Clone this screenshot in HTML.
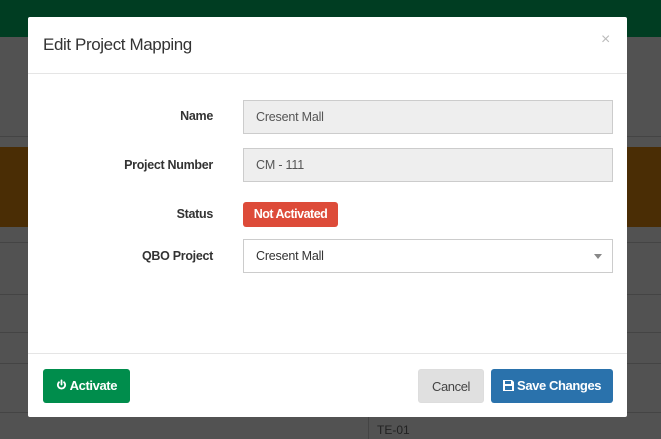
<!DOCTYPE html>
<html style="background:#525252"><head><meta charset="utf-8"><style>
*{box-sizing:border-box;margin:0;padding:0}
body{width:661px;height:439px;overflow:hidden;background:#525252;font-family:"Liberation Sans",sans-serif;position:relative}
.abs{position:absolute}
.line{position:absolute;left:0;width:661px;height:1px;background:#444}
.modal{position:absolute;left:28px;top:17px;width:599px;height:400px;background:#fff;border-radius:2px}
.lbl{position:absolute;right:414px;font-size:12.5px;font-weight:bold;color:#333;letter-spacing:-0.3px;text-align:right}
.inp{position:absolute;left:215px;width:370px;height:34px;border:1px solid #ccc;font-size:12.5px;color:#555;padding:9px 12px;letter-spacing:-0.2px}
.btn{position:absolute;top:352px;height:34px;border-radius:3px;font-size:13px;letter-spacing:-0.4px;padding-top:9px;text-align:center}
</style></head><body>
<div class="abs" style="left:0;top:0;width:661px;height:439px;background:#525252"></div>
<div class="abs" style="left:0;top:0;width:661px;height:37px;background:#003d22"></div>
<div class="abs" style="left:0;top:147px;width:661px;height:80px;background:#4a2d05"></div>
<div class="line" style="top:136px"></div>
<div class="line" style="top:242px"></div>
<div class="line" style="top:294px"></div>
<div class="line" style="top:332px"></div>
<div class="line" style="top:363px"></div>
<div class="line" style="top:412px"></div>
<div class="abs" style="left:368px;top:417px;width:1px;height:22px;background:#444"></div>
<div class="abs" style="left:377px;top:423px;font-size:12px;color:#222">TE-01</div>
<div class="modal">
  <div class="abs" style="left:15px;top:18px;font-size:17px;color:#333;letter-spacing:-0.4px">Edit Project Mapping</div>
  <div class="abs" style="left:573px;top:14px;font-size:16px;color:#bbb">×</div>
  <div class="abs" style="left:0;top:56px;width:599px;height:1px;background:#e5e5e5"></div>
  <div class="lbl" style="top:92px">Name</div>
  <div class="inp" style="top:83px;background:#eee">Cresent Mall</div>
  <div class="lbl" style="top:141px">Project Number</div>
  <div class="inp" style="top:131px;background:#eee">CM - 111</div>
  <div class="lbl" style="top:190px">Status</div>
  <div class="abs" style="left:215px;top:185px;width:95px;height:25px;background:#dd4b39;border-radius:3px;color:#fff;font-size:12.5px;font-weight:bold;letter-spacing:-0.5px;text-align:center;padding-top:5px">Not Activated</div>
  <div class="lbl" style="top:232px">QBO Project</div>
  <div class="inp" style="top:222px;background:#fff;color:#333">Cresent Mall<span class="abs" style="right:10px;top:14px;border-left:4px solid transparent;border-right:4px solid transparent;border-top:5px solid #888"></span></div>
  <div class="abs" style="left:0;top:336px;width:599px;height:1px;background:#e5e5e5"></div>
  <div class="btn" style="left:15px;width:87px;background:#008d4c;color:#fff;font-weight:bold">
    <svg width="11" height="12" viewBox="0 0 12 12" style="vertical-align:-1px"><path d="M6 1v4.5M3.2 3A4 4 0 1 0 8.8 3" fill="none" stroke="#fff" stroke-width="2" stroke-linecap="round"/></svg> Activate</div>
  <div class="btn" style="left:390px;width:66px;background:#e0e0e0;color:#444;border:1px solid #ddd">Cancel</div>
  <div class="btn" style="left:463px;width:122px;background:#2a72ac;color:#fff;font-weight:bold">
    <svg width="11" height="11" viewBox="0 0 11 11" style="vertical-align:-1px"><path d="M0 0h9l2 2v9H0z" fill="#fff"/><rect x="2" y="1" width="6" height="3" fill="#2a72ac"/><rect x="2" y="6" width="7" height="4" fill="#2a72ac"/></svg> Save Changes</div>
</div>
</body></html>
